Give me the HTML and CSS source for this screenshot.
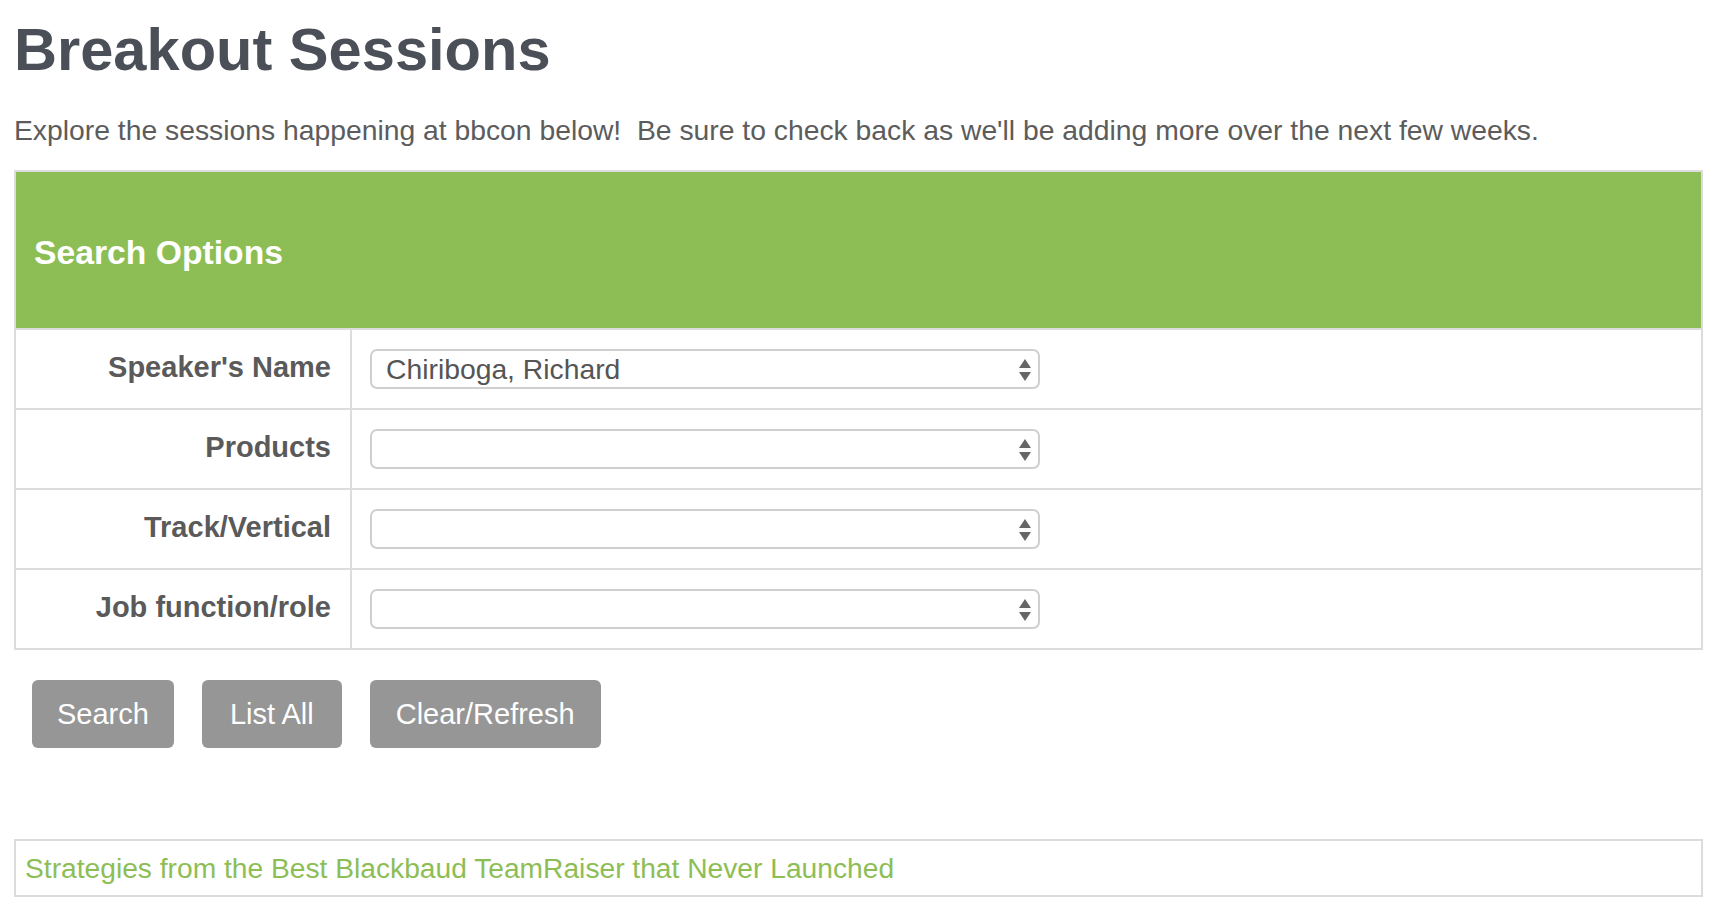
FILE: index.html
```html
<!DOCTYPE html>
<html lang="en">
<head>
<meta charset="utf-8">
<title>Breakout Sessions</title>
<link rel="stylesheet" href="styles.css">
</head>
<body>
<main class="page">
  <h1 class="title">Breakout Sessions</h1>
  <p class="intro">Explore the sessions happening at bbcon below!&nbsp; Be sure to check back as we'll be adding more over the next few weeks.</p>

  <section class="search-box">
    <div class="search-head">Search Options</div>

    <div class="search-row">
      <label class="row-label" for="speaker">Speaker's Name</label>
      <div class="row-field">
        <div class="select-wrap">
          <select id="speaker" class="select">
            <option>Chiriboga, Richard</option>
          </select>
          <svg class="select-arrows" width="12" height="22" viewBox="0 0 12 22" aria-hidden="true"><polygon points="6,0 12,9 0,9"/><polygon points="0,13 12,13 6,22"/></svg>
        </div>
      </div>
    </div>

    <div class="search-row">
      <label class="row-label" for="products">Products</label>
      <div class="row-field">
        <div class="select-wrap">
          <select id="products" class="select"><option></option></select>
          <svg class="select-arrows" width="12" height="22" viewBox="0 0 12 22" aria-hidden="true"><polygon points="6,0 12,9 0,9"/><polygon points="0,13 12,13 6,22"/></svg>
        </div>
      </div>
    </div>

    <div class="search-row">
      <label class="row-label" for="track">Track/Vertical</label>
      <div class="row-field">
        <div class="select-wrap">
          <select id="track" class="select"><option></option></select>
          <svg class="select-arrows" width="12" height="22" viewBox="0 0 12 22" aria-hidden="true"><polygon points="6,0 12,9 0,9"/><polygon points="0,13 12,13 6,22"/></svg>
        </div>
      </div>
    </div>

    <div class="search-row">
      <label class="row-label" for="job">Job function/role</label>
      <div class="row-field">
        <div class="select-wrap">
          <select id="job" class="select"><option></option></select>
          <svg class="select-arrows" width="12" height="22" viewBox="0 0 12 22" aria-hidden="true"><polygon points="6,0 12,9 0,9"/><polygon points="0,13 12,13 6,22"/></svg>
        </div>
      </div>
    </div>
  </section>

  <div class="buttons">
    <button class="btn" type="button">Search</button>
    <button class="btn btn-list" type="button">List All</button>
    <button class="btn btn-clear" type="button">Clear/Refresh</button>
  </div>

  <div class="result">
    <a class="result-link" href="#">Strategies from the Best Blackbaud TeamRaiser that Never Launched</a>
  </div>
</main>
</body>
</html>
```

FILE: styles.css
```css
* {
  box-sizing: border-box;
}

html, body {
  margin: 0;
  padding: 0;
  background: #ffffff;
}

body {
  font-family: "Liberation Sans", Arial, Helvetica, sans-serif;
  color: #5a5a5a;
}

.page {
  padding: 16px 17px 0 14px;
}

.title {
  margin: 0;
  font-size: 59.6px;
  line-height: 68px;
  font-weight: 700;
  color: #4b5058;
}

.intro {
  margin: 30px 0 0 0;
  font-size: 28.3px;
  line-height: 32px;
  color: #5c5c5c;
}

.search-box {
  margin-top: 24px;
  border: 2px solid #dcdcdc;
}

.search-head {
  height: 156px;
  background: #8dbe56;
  color: #ffffff;
  font-size: 33.7px;
  font-weight: 700;
  display: flex;
  align-items: center;
  padding: 4px 0 0 18px;
}

.search-row {
  display: grid;
  grid-template-columns: 336px 1fr;
  height: 80px;
  border-top: 2px solid #dcdcdc;
}

.row-label {
  display: flex;
  align-items: center;
  justify-content: flex-end;
  padding: 0 19px 4px 0;
  font-size: 29px;
  font-weight: 700;
  color: #5a5a5a;
  border-right: 2px solid #dcdcdc;
}

.row-field {
  display: flex;
  align-items: center;
  padding-left: 18px;
}

.select-wrap {
  position: relative;
  width: 670px;
  height: 40px;
}

.select {
  -webkit-appearance: none;
  appearance: none;
  width: 100%;
  height: 40px;
  margin: 0;
  padding: 0 40px 0 14px;
  border: 2px solid #cfcfcf;
  border-radius: 7px;
  background: #ffffff;
  font-family: "Liberation Sans", Arial, Helvetica, sans-serif;
  font-size: 28.3px;
  color: #555555;
  outline: none;
}

.select-arrows {
  position: absolute;
  right: 9px;
  top: 10px;
  fill: #666666;
  pointer-events: none;
}

.buttons {
  display: flex;
  gap: 28px;
  margin-top: 30px;
  padding-left: 18px;
}

.btn {
  height: 68px;
  padding: 0 25px;
  border: none;
  border-radius: 6px;
  background: #969696;
  color: #ffffff;
  font-family: "Liberation Sans", Arial, Helvetica, sans-serif;
  font-size: 29px;
  cursor: pointer;
}

.btn-list {
  padding: 0 28px;
}

.btn-clear {
  padding: 0 26px;
}

.result {
  margin-top: 91px;
  height: 58px;
  border: 2px solid #dcdcdc;
  display: flex;
  align-items: center;
  padding-left: 9px;
}

.result-link {
  font-size: 28.2px;
  color: #8dbe56;
  text-decoration: none;
}
```
